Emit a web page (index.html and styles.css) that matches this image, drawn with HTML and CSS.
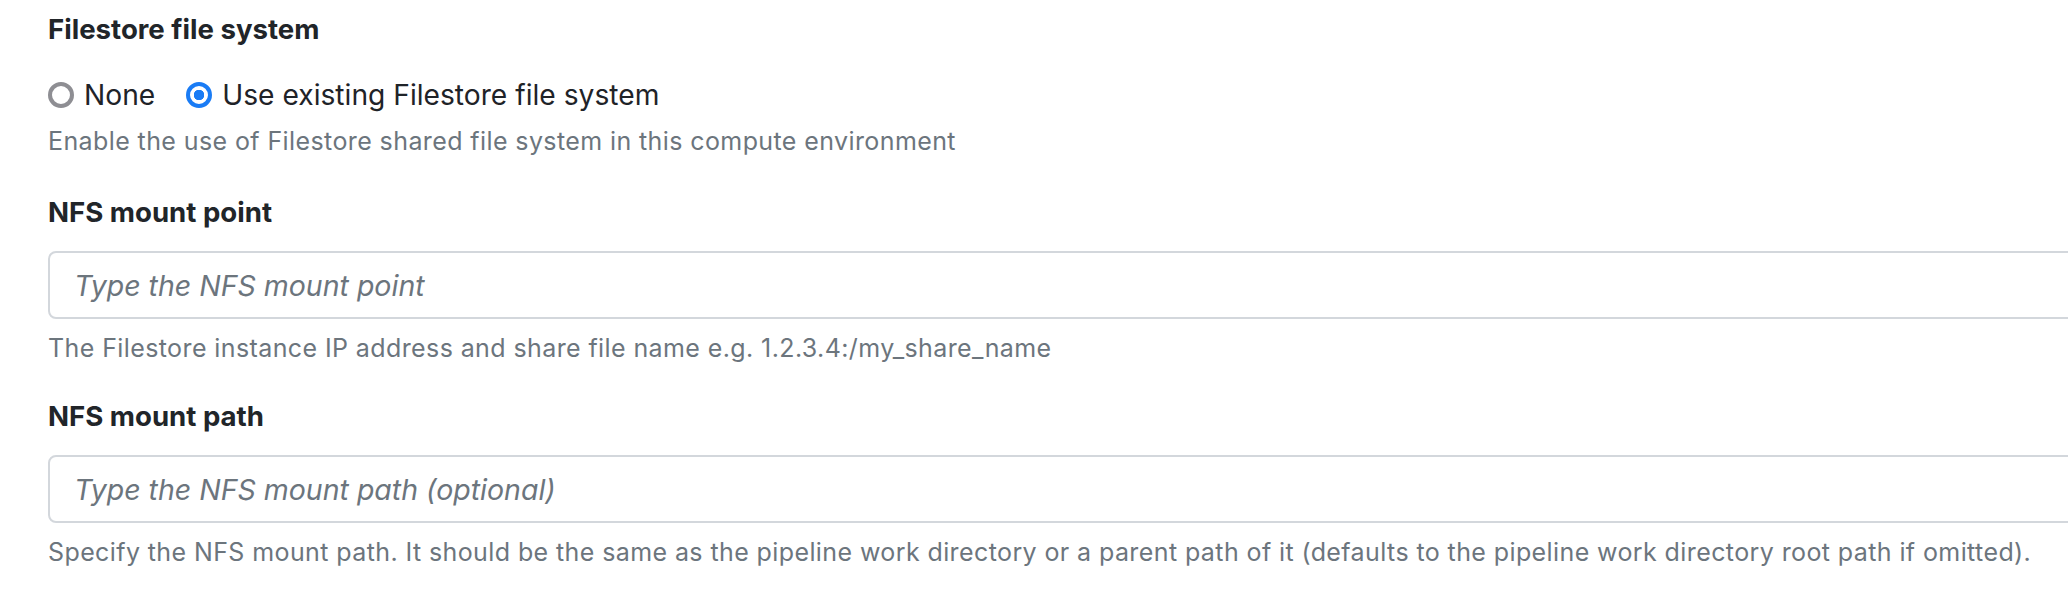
FILE: index.html
```html
<!DOCTYPE html>
<html lang="en">
<head>
<meta charset="utf-8">
<title>Filestore settings</title>
<link rel="stylesheet" href="styles.css">
</head>
<body>
<form class="form">
  <div class="group">
    <div class="label">Filestore file system</div>
    <div class="radios">
      <label class="radio"><input type="radio" name="fs" class="radio-input"><span>None</span></label>
      <label class="radio"><input type="radio" name="fs" class="radio-input" checked><span>Use existing Filestore file system</span></label>
    </div>
    <div class="help help-first">Enable the use of Filestore shared file system in this compute environment</div>
  </div>
  <div class="group">
    <label class="label" for="point">NFS mount point</label>
    <input id="point" class="input" type="text" placeholder="Type the NFS mount point">
    <div class="help">The Filestore instance IP address and share file name e.g. 1.2.3.4:/my_share_name</div>
  </div>
  <div class="group">
    <label class="label" for="path">NFS mount path</label>
    <input id="path" class="input" type="text" placeholder="Type the NFS mount path (optional)">
    <div class="help">Specify the NFS mount path. It should be the same as the pipeline work directory or a parent path of it (defaults to the pipeline work directory root path if omitted).</div>
  </div>
</form>
</body>
</html>
```

FILE: styles.css
```css
html, body {
  margin: 0;
  padding: 0;
  background: #ffffff;
  overflow: hidden;
}

body {
  font-family: Inter, "Noto Sans", sans-serif;
  color: #212529;
}

.form {
  padding: 9px 0 0 48px;
  width: 2060px;
  display: flex;
  flex-direction: column;
}

.group {
  display: flex;
  flex-direction: column;
}

.group + .group {
  margin-top: 34px;
}

.group + .group + .group {
  margin-top: 31px;
}

.label {
  display: block;
  font-size: 27.6px;
  font-weight: 700;
  line-height: 40px;
  color: #212529;
}

.radios {
  display: flex;
  align-items: center;
  margin-top: 26px;
  height: 40px;
}

.radio {
  display: flex;
  align-items: center;
  font-size: 28.2px;
  line-height: 40px;
  color: #1f2328;
  margin-right: 31px;
}

.radio-input {
  appearance: none;
  -webkit-appearance: none;
  margin: 0 10px 0 0;
  width: 26px;
  height: 26px;
  border-radius: 50%;
  border: 4px solid #8e8e93;
  box-sizing: border-box;
  background: #ffffff;
  position: relative;
}

.radio-input:checked {
  border-color: #1a7cf5;
  background: radial-gradient(circle, #1a7cf5 0 5px, #ffffff 5.5px);
}

.help {
  font-size: 25px;
  letter-spacing: 0.4px;
  line-height: 34px;
  color: #6c757d;
  margin-top: 12px;
}

.help-first {
  margin-top: 9px;
}

.input {
  display: block;
  margin-top: 19px;
  width: 100%;
  height: 68px;
  box-sizing: border-box;
  border: 2px solid #d3d7dc;
  border-radius: 8px;
  padding: 0 0 0 24px;
  font-family: Inter, "Noto Sans", sans-serif;
  font-size: 28.5px;
  color: #212529;
  background: #ffffff;
  outline: none;
}

.input::placeholder {
  color: #6c757d;
  font-style: italic;
  opacity: 1;
}
```
